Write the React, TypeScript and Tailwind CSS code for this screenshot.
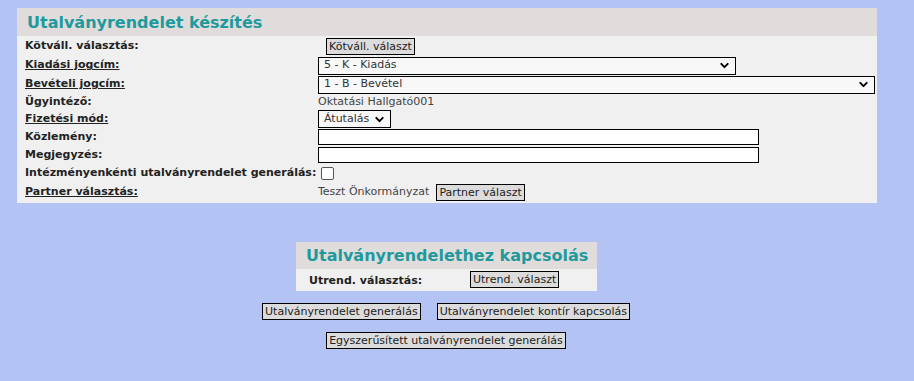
import { ChevronDown } from "lucide-react";

const font = { fontFamily: "Verdana, 'DejaVu Sans', sans-serif" };

const Btn = ({ children }: { children: React.ReactNode }) => (
  <button className="h-[17px] whitespace-nowrap border border-black bg-[#dcdcdc] px-[2px] text-[11px] leading-[15px] text-[#222]">
    {children}
  </button>
);

const Select = ({ value, w }: { value: string; w: string }) => (
  <div className={`flex h-[18px] items-center justify-between border border-black bg-[#f8f8f8] pl-[5px] pr-[4px] ${w}`}>
    <span className="text-[11px] text-[#333]">{value}</span>
    <ChevronDown size={13} strokeWidth={3.5} className="text-black" />
  </div>
);

const Label = ({ children, u }: { children: React.ReactNode; u?: boolean }) => (
  <span className={`whitespace-nowrap text-[11px] font-bold text-[#222] ${u ? "underline" : ""}`}>{children}</span>
);

export default function App() {
  return (
    <div style={font} className="h-[381px] w-[914px] overflow-hidden bg-[#b3c3f4] pt-[8px]">
      <div className="ml-[17px] w-[860px] bg-[#f0f0f0] pb-[2px]">
        <div className="h-[28px] whitespace-nowrap bg-[#e0dcdc] pl-[10px] text-[16px] font-bold leading-[29px] text-[#1e9a9c]">
          Utalványrendelet készítés
        </div>
        <div className="grid grid-cols-[293px_1fr] items-center pl-[8px]">
          <div className="flex h-[20px] items-center"><Label>Kötváll. választás:</Label></div>
          <div className="flex h-[20px] items-center pl-[8px]"><Btn>Kötváll. választ</Btn></div>

          <div className="flex h-[19px] items-center"><Label u>Kiadási jogcím:</Label></div>
          <div className="flex h-[19px] items-center"><Select value="5 - K - Kiadás" w="w-[418px]" /></div>

          <div className="flex h-[19px] items-center"><Label u>Bevételi jogcím:</Label></div>
          <div className="flex h-[19px] items-center"><Select value="1 - B - Bevétel" w="w-[557px]" /></div>

          <div className="flex h-[16px] items-center"><Label>Ügyintéző:</Label></div>
          <div className="flex h-[16px] items-center text-[11px] text-[#444]">Oktatási Hallgató001</div>

          <div className="flex h-[18px] items-center"><Label u>Fizetési mód:</Label></div>
          <div className="flex h-[18px] items-center"><Select value="Átutalás" w="w-[73px]" /></div>

          <div className="flex h-[18px] items-center"><Label>Közlemény:</Label></div>
          <div className="flex h-[18px] items-center">
            <div className="h-[16px] w-[441px] border border-black bg-white" />
          </div>

          <div className="flex h-[18px] items-center"><Label>Megjegyzés:</Label></div>
          <div className="flex h-[18px] items-center">
            <div className="h-[16px] w-[441px] border border-black bg-white" />
          </div>

          <div className="flex h-[19px] items-center">
            <Label>Intézményenkénti utalványrendelet generálás:</Label>
          </div>
          <div className="flex h-[19px] items-center">
            <div className="ml-[3px] h-[13px] w-[13px] rounded-[2px] border border-[#555] bg-white" />
          </div>

          <div className="flex h-[18px] items-center"><Label u>Partner választás:</Label></div>
          <div className="flex h-[18px] items-center gap-[7px] whitespace-nowrap text-[11px] text-[#444]">
            Teszt Önkormányzat <Btn>Partner választ</Btn>
          </div>
        </div>
      </div>

      <div className="ml-[296px] mt-[39px] w-[301px] bg-[#f0f0f0] pb-[2px]">
        <div className="h-[27px] whitespace-nowrap bg-[#e0dcdc] pl-[10px] text-[16px] font-bold leading-[28px] text-[#1e9a9c]">
          Utalványrendelethez kapcsolás
        </div>
        <div className="flex h-[20px] items-center pl-[13px]">
          <span className="w-[161px]"><Label>Utrend. választás:</Label></span>
          <Btn>Utrend. választ</Btn>
        </div>
      </div>

      <div className="mt-[12px] flex justify-center gap-[16px] pr-[22px]">
        <Btn>Utalványrendelet generálás</Btn>
        <Btn>Utalványrendelet kontír kapcsolás</Btn>
      </div>
      <div className="mt-[12px] flex justify-center pr-[22px]">
        <Btn>Egyszerűsített utalványrendelet generálás</Btn>
      </div>
    </div>
  );
}
